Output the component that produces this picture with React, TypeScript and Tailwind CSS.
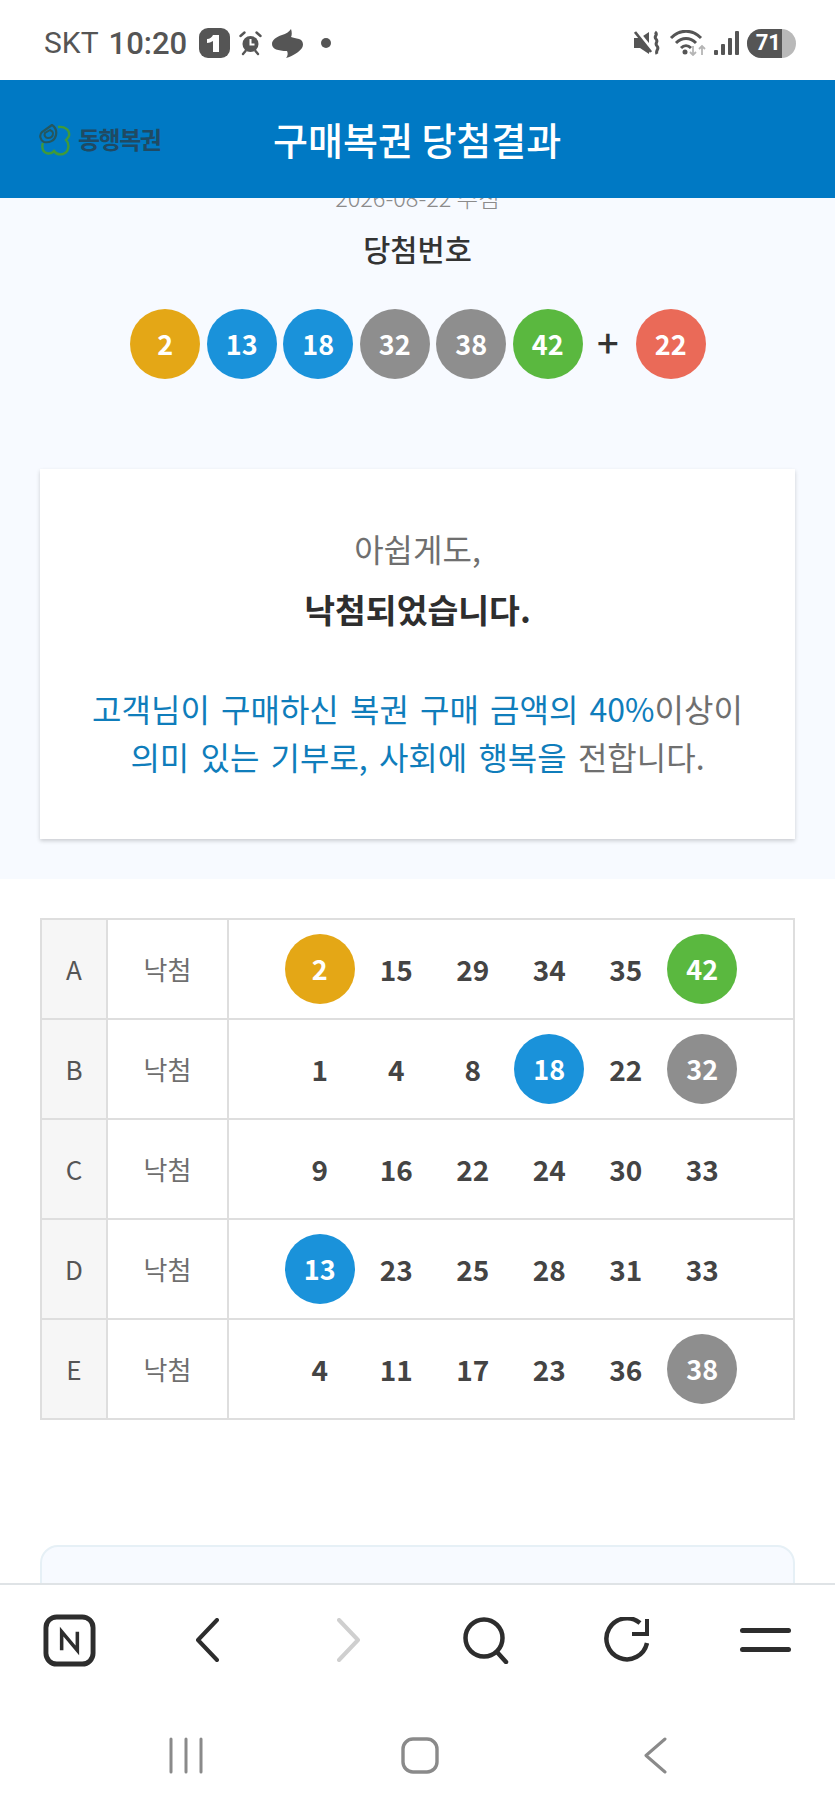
import React from "react";

const GOLD = "bg-[#e4a716]";
const BLUE = "bg-[#1a92da]";
const GRAY = "bg-[#8e8e8e]";
const GREEN = "bg-[#5ab83f]";
const RED = "bg-[#ea6a58]";

function ballColor(n: number) {
  if (n <= 10) return GOLD;
  if (n <= 20) return BLUE;
  if (n <= 30) return RED;
  if (n <= 40) return GRAY;
  return GREEN;
}

function Ball({ n }: { n: number }) {
  return (
    <span className={`flex h-[70px] w-[70px] items-center justify-center rounded-full text-[27px] font-bold text-white ${ballColor(n)}`}>
      {n}
    </span>
  );
}

const rows: { label: string; nums: number[]; hit: number[] }[] = [
  { label: "A", nums: [2, 15, 29, 34, 35, 42], hit: [2, 42] },
  { label: "B", nums: [1, 4, 8, 18, 22, 32], hit: [18, 32] },
  { label: "C", nums: [9, 16, 22, 24, 30, 33], hit: [] },
  { label: "D", nums: [13, 23, 25, 28, 31, 33], hit: [13] },
  { label: "E", nums: [4, 11, 17, 23, 36, 38], hit: [38] },
];

function StatusBar() {
  return (
    <div className="flex h-[80px] shrink-0 items-center justify-between bg-white pl-[44px] pr-[39px] pt-[6px] text-[#555555]">
      <div className="flex items-center">
        <span className="font-['Roboto'] text-[30px] leading-none">SKT</span>
        <span className="ml-[10px] font-['Roboto'] text-[31px] font-medium leading-none">10:20</span>
        <svg className="ml-[12px]" width="31" height="30" viewBox="0 0 31 30">
          <rect width="31" height="30" rx="9" fill="#555" />
          <path d="M8 11c3 0 5-2 6-4h6v17h-6V13c-2 1-4 2-6 2z" fill="#fff" />
        </svg>
        <svg className="ml-[9px]" width="23" height="26" viewBox="0 0 23 26">
          <circle cx="11.500" cy="14" r="8" fill="#555" />
          <path d="M11.500 9v5.500h4" stroke="#fff" strokeWidth="2" fill="none" />
          <path d="M1.500 6l4-3.500M21.500 6l-4-3.500M4 24l2.500-3M19 24l-2.500-3" stroke="#555" strokeWidth="2.400" strokeLinecap="round" />
        </svg>
        <svg className="ml-[10px]" width="31" height="29" viewBox="0 0 31 29">
          <path d="M19 0C17 3 14 5 10 6 4 8 0 11 0 15c0 5 6 7 15 7 1 2 1 5-1 7 7-2 13-6 16-10 2-3 1-8-3-9-3-1-6-1-8-2 1-2 1-5 0-8z" fill="#555" />
        </svg>
        <span className="ml-[18px] h-[10px] w-[10px] rounded-full bg-[#555555]" />
      </div>
      <div className="flex items-center">
        <svg width="27" height="26" viewBox="0 0 27 26">
          <path d="M1 8h6l9-6v22l-9-6H1z" fill="#555" />
          <path d="M4 1l17 21" stroke="#fff" strokeWidth="3.500" />
          <path d="M2 2l16 20" stroke="#555" strokeWidth="2.800" />
          <path d="M22 2c4 3-2 4 1 7s-2 4 1 7-2 4 0 8" stroke="#555" strokeWidth="3" fill="none" />
        </svg>
        <svg className="ml-[9px]" width="38" height="26" viewBox="0 0 38 26">
          <path d="M2 8c9-9 21-9 30 0" stroke="#555" strokeWidth="3" fill="none" />
          <path d="M7 13c6-6 14-6 20 0" stroke="#555" strokeWidth="3" fill="none" />
          <path d="M12 18c3-3 7-3 10 0" stroke="#555" strokeWidth="3" fill="none" />
          <circle cx="16" cy="22" r="2.500" fill="#555" />
          <path d="M24 16v9M21 22l3 3 3-3" stroke="#b5b5b5" strokeWidth="1.800" fill="none" />
          <path d="M33 25v-9M30 19l3-3 3 3" stroke="#b5b5b5" strokeWidth="1.800" fill="none" />
        </svg>
        <svg className="ml-[7px]" width="25" height="26" viewBox="0 0 25 26">
          <rect x="0" y="20" width="4" height="5" rx="1" fill="#555" />
          <rect x="7" y="14" width="4" height="11" rx="1" fill="#555" />
          <rect x="14" y="8" width="4" height="17" rx="1" fill="#555" />
          <rect x="21" y="1" width="4" height="24" rx="1" fill="#555" />
        </svg>
        <div className="relative ml-[8px] h-[29px] w-[49px] overflow-hidden rounded-full bg-[#b9b9b9]">
          <div className="flex h-full w-[35px] items-center justify-end bg-[#555555] pr-[1px] font-['Roboto'] text-[22px] font-bold leading-none text-white">
            71
          </div>
        </div>
      </div>
    </div>
  );
}

function Header() {
  return (
    <header className="z-10 flex h-[118px] shrink-0 items-center bg-[#0079c4] pl-[39px]">
      <svg width="32" height="32" viewBox="0 0 32 32" className="mt-[2px]">
        <path d="M19 3c7-1 12 3 11 9-1 2-2 3-3 4 4 4 3 12-3 14-4 1-7 0-9-3-3 4-9 3-11-1-1-3-1-5 0-7" fill="none" stroke="#3f9a3a" strokeWidth="2.400" />
        <path d="M13 1L3 8C0 11 1 16 5 18c5 1 11-1 12-7 1-5-1-8-4-10z" fill="none" stroke="#24575f" strokeWidth="2.200" />
        <path d="M11 6L6 9c-1 2 0 5 3 5 3 0 5-2 5-5 0-1-1-2-3-3z" fill="none" stroke="#24575f" strokeWidth="2" />
      </svg>
      <span className="ml-[7px] w-[82px] text-[24px] font-bold leading-none tracking-[-1.500px] text-[#1f4a63] whitespace-nowrap">동행복권</span>
      <h1 className="ml-[113px] text-[38px] font-medium leading-none text-white whitespace-nowrap">구매복권 당첨결과</h1>
    </header>
  );
}

function WinningPanel() {
  return (
    <section className="flex h-[681px] flex-col items-center bg-[#f7faff]">
      <p className="-mt-[15px] text-[23.500px] font-light leading-[28px] text-[#8b8b8b]">2026-08-22 추첨</p>
      <p className="mt-[17px] text-[29.500px] font-medium leading-[40px] text-[#333333]">당첨번호</p>
      <div className="ml-[1px] mt-[41px] flex items-center">
        <div className="flex gap-[6.500px]">
          {[2, 13, 18, 32, 38, 42].map((n) => (
            <Ball key={n} n={n} />
          ))}
        </div>
        <span className="ml-[13px] -mt-[4px] w-[24px] text-center text-[38px] font-medium leading-none text-[#333333]">+</span>
        <span className="ml-[16px]">
          <Ball n={22} />
        </span>
      </div>
      <div className="mt-[90px] flex h-[370px] w-[755px] flex-col items-center bg-white pt-[56px] shadow-[0_2px_4px_rgba(0,0,0,0.18)]">
        <p className="text-[32px] leading-[46px] text-[#6f6f6f]">아쉽게도,</p>
        <p className="mt-[15px] text-[33.500px] font-bold leading-[46px] text-[#2e2e2e]">낙첨되었습니다.</p>
        <div className="mt-[52px] text-center text-[32px] leading-[48px] text-[#6f6f6f] [word-spacing:4px]">
          <p>
            <span className="text-[#0f7dbb]">고객님이 구매하신 복권 구매 금액의 40%</span>이상이
          </p>
          <p>
            <span className="text-[#0f7dbb]">의미 있는 기부로, 사회에 행복을</span> 전합니다.
          </p>
        </div>
      </div>
    </section>
  );
}

function ResultTable() {
  return (
    <div className="mx-[40px] mt-[39px] border-t-2 border-l-2 border-[#dedede]">
      {rows.map((r) => (
        <div key={r.label} className="flex h-[100px] border-b-2 border-r-2 border-[#dedede]">
          <div className="flex w-[66px] items-center justify-center border-r-2 border-[#dedede] bg-[#f6f6f6] pb-[2px] text-[26px] text-[#555555]">
            {r.label}
          </div>
          <div className="flex w-[121px] items-center justify-center border-r-2 border-[#dedede] pb-[2px] text-[26px] text-[#6f6f6f]">
            낙첨
          </div>
          <div className="flex flex-1 items-center justify-center">
            {r.nums.map((n) => (
              <span key={n} className="flex w-[76.500px] justify-center">
                {r.hit.includes(n) ? (
                  <Ball n={n} />
                ) : (
                  <span className="text-[28px] font-bold text-[#444444]">{n}</span>
                )}
              </span>
            ))}
          </div>
        </div>
      ))}
    </div>
  );
}

function BrowserBar() {
  return (
    <div className="flex h-[112px] shrink-0 items-center border-t-2 border-[#dfe3e6] bg-white pl-[43px]">
      <svg width="53" height="53" viewBox="0 0 54 54">
        <rect x="3" y="3" width="48" height="48" rx="11" fill="none" stroke="#2d2d2d" strokeWidth="5" />
        <path d="M19 37V18l16 19V18" fill="none" stroke="#2d2d2d" strokeWidth="3.600" />
      </svg>
      <svg className="ml-[99px]" width="24" height="44" viewBox="0 0 24 44">
        <path d="M22 2L3 22l19 20" fill="none" stroke="#2d2d2d" strokeWidth="4" strokeLinecap="round" strokeLinejoin="round" />
      </svg>
      <svg className="ml-[118px]" width="24" height="44" viewBox="0 0 24 44">
        <path d="M2 2l19 20L2 42" fill="none" stroke="#cfcfcf" strokeWidth="4" strokeLinecap="round" strokeLinejoin="round" />
      </svg>
      <svg className="ml-[102px]" width="47" height="47" viewBox="0 0 47 47">
        <circle cx="21" cy="21" r="18.500" fill="none" stroke="#2d2d2d" strokeWidth="4.500" />
        <path d="M34 35l9 10" stroke="#2d2d2d" strokeWidth="4.500" strokeLinecap="round" />
      </svg>
      <svg className="ml-[94px]" width="45" height="46" viewBox="0 0 45 46">
        <path d="M36 6A20.500 20.500 0 1 0 43 26" fill="none" stroke="#2d2d2d" strokeWidth="4.500" />
        <path d="M43 2V17H28" fill="none" stroke="#2d2d2d" strokeWidth="4" />
      </svg>
      <div className="ml-[91px] flex w-[51px] flex-col gap-[14px]">
        <div className="h-[5px] rounded-full bg-[#2d2d2d]" />
        <div className="h-[5px] rounded-full bg-[#2d2d2d]" />
      </div>
    </div>
  );
}

function NavBar() {
  return (
    <div className="flex h-[115px] shrink-0 items-start bg-white pl-[169px] pt-[42px]">
      <svg width="34" height="37" viewBox="0 0 34 37">
        <path d="M2 2v33M17 2v33M32 2v33" stroke="#8a8a8a" strokeWidth="3" strokeLinecap="round" />
      </svg>
      <svg className="ml-[198px]" width="38" height="37" viewBox="0 0 38 37">
        <rect x="2" y="2" width="34" height="33" rx="10" fill="none" stroke="#8a8a8a" strokeWidth="3.400" />
      </svg>
      <svg className="ml-[204px]" width="24" height="37" viewBox="0 0 24 37">
        <path d="M22 2L3 18.500 22 35" fill="none" stroke="#8a8a8a" strokeWidth="3" strokeLinecap="round" strokeLinejoin="round" />
      </svg>
    </div>
  );
}

export default function App() {
  return (
    <div className="flex h-[1810px] w-[835px] flex-col overflow-hidden bg-white font-['Noto_Sans_CJK_KR','Noto_Sans',sans-serif]">
      <StatusBar />
      <Header />
      <main className="relative min-h-0 flex-1 overflow-hidden">
        <WinningPanel />
        <ResultTable />
        <div className="mx-[40px] mt-[125px] h-[200px] rounded-[18px] border-2 border-[#e6f0f6] bg-[#f7faff]" />
      </main>
      <BrowserBar />
      <NavBar />
    </div>
  );
}
